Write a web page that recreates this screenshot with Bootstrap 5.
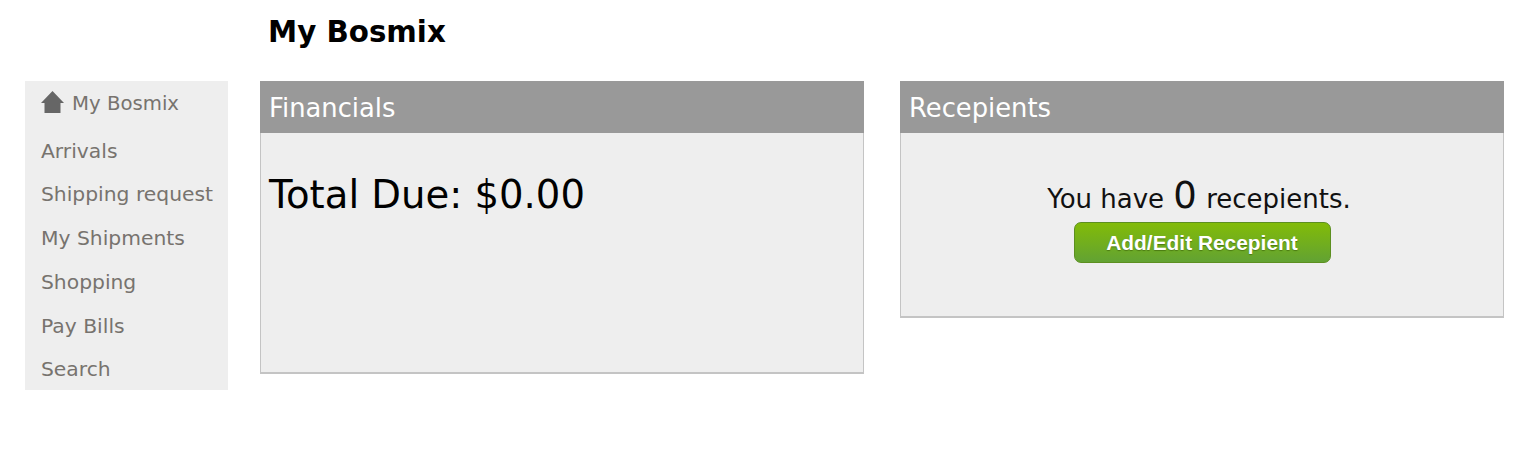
<!DOCTYPE html>
<html lang="en">
<head>
    <meta charset="UTF-8">
    <meta name="viewport" content="width=device-width, initial-scale=1.0">
    <title>My Bosmix</title>
    <link href="https://cdn.jsdelivr.net/npm/bootstrap@5.3.2/dist/css/bootstrap.min.css" rel="stylesheet">
    <style>
        body {
            font-family: "DejaVu Sans", Verdana, sans-serif;
            background: #fff;
        }
        .page-wrap {
            padding: 0 21px 0 25px;
        }
        .page-title {
            margin: 0 0 0 243px;
            padding-top: 14px;
            height: 81px;
            font-size: 29.3px;
            line-height: 36px;
            font-weight: 700;
            color: #000;
            font-family: "DejaVu Sans", Verdana, sans-serif;
        }
        .side-menu {
            width: 203px;
            height: 309px;
            flex: none;
            background: #eee;
            padding: 8.5px 0 0 16px;
            margin-right: 32px;
        }
        .side-menu a {
            display: block;
            height: 43.8px;
            line-height: 28px;
            font-size: 20.3px;
            color: #77736e;
            text-decoration: none;
            white-space: nowrap;
        }
        .side-menu a.first {
            height: 47px;
            font-size: 19.7px;
        }
        .side-menu svg {
            margin-right: 8px;
            vertical-align: -3px;
        }
        .panels {
            gap: 36px;
        }
        .panel-box {
            width: 604px;
            background: #eee;
            border: 1px solid #c4c4c4;
            border-top: 0;
            border-bottom-width: 2px;
        }
        .panel-fin { height: 293px; }
        .panel-rec { height: 237px; }
        .panel-head {
            height: 52px;
            margin: 0 -1px;
            padding-left: 9px;
            background: #999;
            color: #fff;
            font-size: 25.8px;
            line-height: 54px;
        }
        .total-due {
            margin: 40px 0 0 8px;
            font-size: 38.6px;
            line-height: 44px;
            color: #000;
        }
        .rec-line {
            margin-top: 41px;
            padding-right: 6px;
            font-size: 26px;
            line-height: 50px;
            color: #111;
        }
        .rec-line span {
            font-size: 37px;
            line-height: 40px;
            padding: 0 1px;
        }
        .btn-add {
            display: block;
            width: 257px;
            height: 41px;
            margin: -2px auto 0;
            padding: 0;
            border: 1px solid #5c8f20;
            border-radius: 7px;
            background: linear-gradient(#82bb08, #62a233);
            color: #fff;
            font-family: "Liberation Sans", Arial, sans-serif;
            font-weight: 700;
            font-size: 20.9px;
            line-height: 39px;
            text-shadow: 0 1px 1px #4b7a12;
        }
    </style>
</head>
<body>
    <div class="page-wrap">
        <h1 class="page-title">My Bosmix</h1>
        <div class="d-flex align-items-start">
            <div class="side-menu">
                <a class="first" href="#"><svg width="23" height="22" viewBox="0 0 23 22"><path fill="#666" d="M11.500 0 23 12H19.500V22H3.500V12H0Z"/></svg>My Bosmix</a>
                <a href="#">Arrivals</a>
                <a href="#">Shipping request</a>
                <a href="#">My Shipments</a>
                <a href="#">Shopping</a>
                <a href="#">Pay Bills</a>
                <a href="#">Search</a>
            </div>
            <div class="d-flex align-items-start panels">
                <div class="panel-box panel-fin">
                    <div class="panel-head">Financials</div>
                    <p class="total-due">Total Due: $0.00</p>
                </div>
                <div class="panel-box panel-rec">
                    <div class="panel-head">Recepients</div>
                    <div class="rec-line text-center">You have <span>0</span> recepients.</div>
                    <button type="button" class="btn btn-add">Add/Edit Recepient</button>
                </div>
            </div>
        </div>
    </div>
    <script src="https://cdn.jsdelivr.net/npm/bootstrap@5.3.2/dist/js/bootstrap.bundle.min.js"></script>
</body>
</html>
